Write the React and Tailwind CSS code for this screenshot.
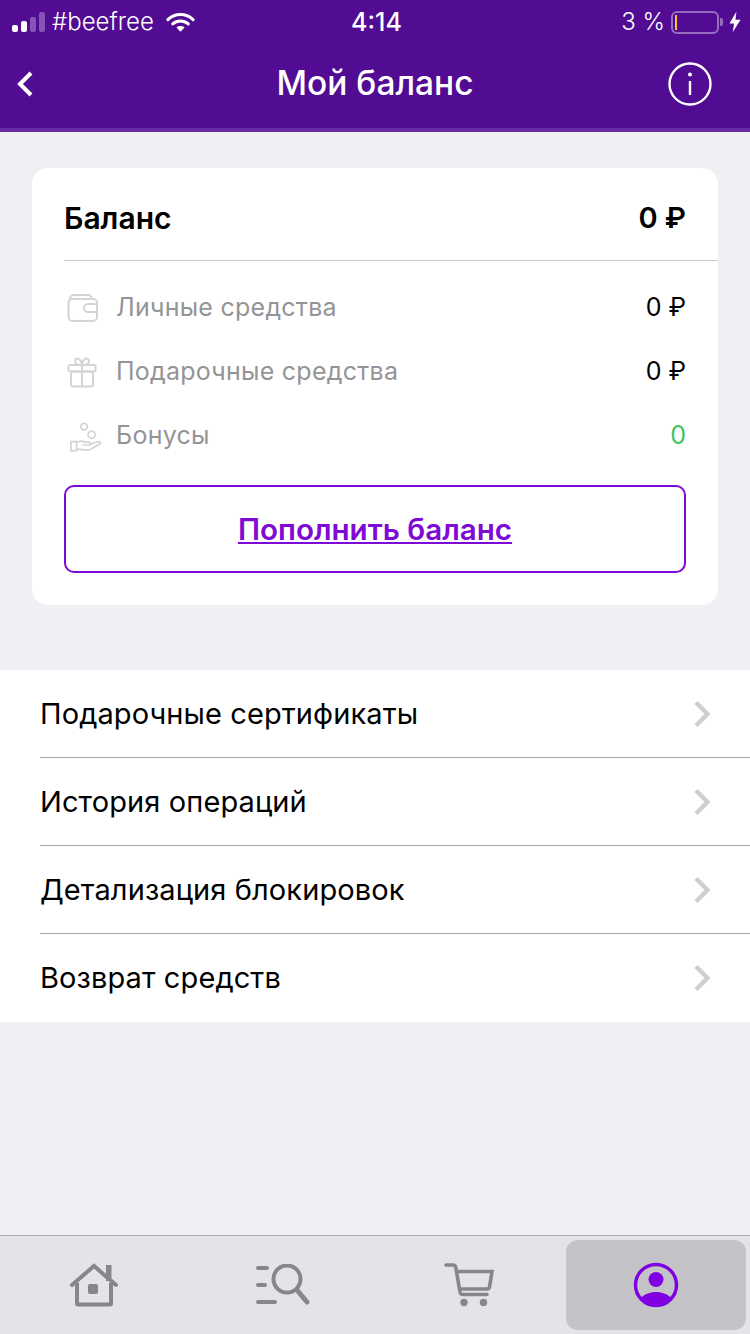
import React from 'react';

const font = 'font-["Inter","Noto_Sans",sans-serif]';

function StatusBar() {
  return (
    <div className="flex h-10 items-center justify-between pl-3 pr-[9px] pt-1 text-white">
      <div className="flex w-[260px] items-center">
        <div className="flex items-end gap-[3px]">
          <div className="h-[7px] w-[6px] rounded-[2px] bg-white" />
          <div className="h-[11px] w-[6px] rounded-[2px] bg-white" />
          <div className="h-[15px] w-[6px] rounded-[2px] bg-white/30" />
          <div className="h-[20px] w-[6px] rounded-[2px] bg-white/30" />
        </div>
        <span className="ml-[7px] text-[24px] font-light leading-none">#beefree</span>
        <svg className="ml-[12px]" width="29" height="22" viewBox="0 0 30 22" fill="none">
          <path d="M2 8.5C9.5 1.5 20.5 1.5 28 8.5" stroke="white" strokeWidth="3.2" strokeLinecap="round" />
          <path d="M7 13C11.5 9 18.5 9 23 13" stroke="white" strokeWidth="3.2" strokeLinecap="round" />
          <path d="M15 21L10.8 16.6C13.2 14.6 16.8 14.6 19.2 16.6Z" fill="white" />
        </svg>
      </div>
      <span className="text-[25px] font-medium leading-none">4:14</span>
      <div className="flex w-[260px] items-center justify-end">
        <span className="text-[24px] font-light leading-none">3 %</span>
        <div className="ml-[6px] flex h-[23px] w-[48px] items-center rounded-[6px] border-2 border-white/40 pl-[2px]">
          <div className="h-[15px] w-[2px] bg-[#f8c42c]" />
        </div>
        <div className="ml-[1px] h-[8px] w-[3px] rounded-r-[2px] bg-white/40" />
        <svg className="ml-[6px]" width="12" height="22" viewBox="0 0 13 22">
          <path d="M8 0L0.5 12.5H5.5L4 22L12.5 8.5H7Z" fill="white" />
        </svg>
      </div>
    </div>
  );
}

function NavBar() {
  return (
    <div className="box-content grid h-[88px] grid-cols-[1fr_auto_1fr] items-center border-b-4 border-[#6a2aa6] pl-4 pr-[38px]">
      <svg width="18" height="28" viewBox="0 0 18 28" fill="none">
        <path d="M15 3L4 14L15 25" stroke="white" strokeWidth="4" />
      </svg>
      <span className="pl-[22px] text-[33.5px] font-medium leading-none text-white">Мой баланс</span>
      <svg className="justify-self-end" width="44" height="44" viewBox="0 0 44 44" fill="none">
        <circle cx="22" cy="22" r="20.5" stroke="white" strokeWidth="2.4" />
        <circle cx="22" cy="12.5" r="2" fill="white" />
        <path d="M22 19V33" stroke="white" strokeWidth="2.4" />
      </svg>
    </div>
  );
}

function WalletIcon() {
  return (
    <svg width="32" height="28" viewBox="0 0 32 28" fill="none" stroke="#d4d4d6" strokeWidth="2">
      <path d="M3 5C3 2.5 5 1 7 1H21C23 1 24.5 2.5 24.5 4.5" strokeLinecap="round" />
      <rect x="1.5" y="5" width="28.5" height="22" rx="4" />
      <path d="M30 10H21C18.5 10 17 12 17 14C17 16 18.5 18 21 18H30" />
    </svg>
  );
}

function GiftIcon() {
  return (
    <svg width="30" height="31" viewBox="0 0 30 31" fill="none" stroke="#d4d4d6" strokeWidth="2">
      <rect x="1.5" y="8" width="27" height="6.5" rx="1.5" />
      <rect x="4" y="14.5" width="22" height="15" rx="2.5" />
      <path d="M15 8V29.5" />
      <path d="M15 8C12 8 8 7.5 8 4.2C8 1.8 10.5 0.8 12 2C13.8 3.4 15 6 15 8Z" />
      <path d="M15 8C18 8 22 7.5 22 4.2C22 1.8 19.5 0.8 18 2C16.2 3.4 15 6 15 8Z" />
    </svg>
  );
}

function BonusIcon() {
  return (
    <svg className="ml-[3px] mt-[2px]" width="32" height="30" viewBox="0 0 34 31" fill="none" stroke="#d4d4d6" strokeWidth="1.8">
      <circle cx="15" cy="4.5" r="3.5" />
      <circle cx="23" cy="13" r="3.8" />
      <path d="M1 20.5H7V30H1Z" />
      <path d="M7 21.5C10 19.5 13 19.5 15.5 21H20C22 21 22 24 20 24H14" strokeLinecap="round" />
      <path d="M20.5 23.5L29 20.5C32 19.8 33.2 21.5 31.5 23L21 29C18 30.2 12 28.8 7 28" strokeLinecap="round" />
    </svg>
  );
}

const balanceRows = [
  { label: 'Личные средства', value: '0 ₽', icon: <WalletIcon />, valueClass: 'text-black' },
  { label: 'Подарочные средства', value: '0 ₽', icon: <GiftIcon />, valueClass: 'text-black' },
  { label: 'Бонусы', value: '0', icon: <BonusIcon />, valueClass: 'text-[#3fc35f]' },
];

const menuRows = ['Подарочные сертификаты', 'История операций', 'Детализация блокировок', 'Возврат средств'];

function BalanceCard() {
  return (
    <div className="mx-8 mt-9 h-[437px] rounded-2xl bg-white pl-8">
      <div className="flex h-[93px] items-center justify-between border-b border-[#cdcdd0] pr-8 pt-2 font-semibold text-black">
        <span className="text-[30px]">Баланс</span>
        <span className="text-[29px]">0 ₽</span>
      </div>
      <div className="mt-[15px] pr-8">
        {balanceRows.map((row) => (
          <div key={row.label} className="flex h-16 items-center">
            <div className="flex w-[52px] shrink-0 items-center pl-[3px]">{row.icon}</div>
            <span className="flex-1 text-[25px] tracking-[0.25px] text-[#949496]">{row.label}</span>
            <span className={`text-[25px] ${row.valueClass}`}>{row.value}</span>
          </div>
        ))}
        <button
          type="button"
          className="mt-[17px] flex h-[88px] w-full items-center justify-center rounded-[10px] border-2 border-[#7f0ad6] text-[29.6px] font-semibold text-[#7f0ad6] underline"
        >
          Пополнить баланс
        </button>
      </div>
    </div>
  );
}

function MenuList() {
  return (
    <div className="mt-[65px] bg-white pl-10">
      {menuRows.map((label, i) => (
        <div
          key={label}
          className={`flex h-[88px] items-center justify-between pr-[39px] ${i < menuRows.length - 1 ? 'border-b border-[#a9a9ab]' : ''}`}
        >
          <span className="text-[29px] tracking-[0.1px] text-black">{label}</span>
          <svg width="18" height="28" viewBox="0 0 18 28" fill="none">
            <path d="M3 2.5L14.5 14L3 25.5" stroke="#cfcfd1" strokeWidth="4.4" />
          </svg>
        </div>
      ))}
    </div>
  );
}

function TabBar() {
  return (
    <div className="grid h-[99px] grid-cols-[1fr_1fr_1fr_180px] border-t border-[#aeaeb0] bg-[#e3e3e8] pb-1 pr-1 pt-1">
      <div className="flex items-center justify-center">
        <svg width="48" height="44" viewBox="0 0 48 44" fill="none">
          <path d="M2 22L24 3L46 22" stroke="#87878a" strokeWidth="4" strokeLinecap="round" />
          <path d="M7 20V40.5C7 41 7.5 41.5 8 41.5H40C40.5 41.5 41 41 41 40.5V20" stroke="#87878a" strokeWidth="4" />
          <rect x="36" y="2" width="5.5" height="16" fill="#87878a" />
          <rect x="18" y="21" width="10" height="10" rx="2" fill="#87878a" />
        </svg>
      </div>
      <div className="flex items-center justify-center">
        <svg width="54" height="42" viewBox="0 0 54 42" fill="none" stroke="#87878a" strokeLinecap="round">
          <path d="M2 4H11M2 21H9M2 38H19" strokeWidth="4" />
          <circle cx="31" cy="15" r="13.5" strokeWidth="4" />
          <path d="M41 26L51 38" strokeWidth="5" />
        </svg>
      </div>
      <div className="flex items-center justify-center pr-[5px]">
        <svg width="50" height="44" viewBox="0 0 50 44" fill="none">
          <path d="M2 2H9C10.5 2 11.5 3 11.8 4.5L16 29C16.3 30.5 17.5 31.5 19 31.5H43" stroke="#87878a" strokeWidth="3.6" strokeLinecap="round" />
          <path d="M12 8.5H48L45.5 24C45.3 25.3 44.3 26 43 26H15" stroke="#87878a" strokeWidth="3.6" />
          <circle cx="20" cy="39.5" r="3.7" fill="#87878a" />
          <circle cx="39.5" cy="39.5" r="3.7" fill="#87878a" />
        </svg>
      </div>
      <div className="flex items-center justify-center rounded-xl bg-[#c4c4c8]">
        <svg width="46" height="46" viewBox="0 0 46 46" fill="none">
          <circle cx="23" cy="23" r="20.5" stroke="#7f00e0" strokeWidth="3.4" />
          <circle cx="23" cy="17.5" r="7.5" fill="#7f00e0" />
          <path d="M7 37C11 32 17 30 23 30C29 30 35 32 39 37C35 42 29 44.5 23 44.5C17 44.5 11 42 7 37Z" fill="#7f00e0" />
        </svg>
      </div>
    </div>
  );
}

export default function App() {
  return (
    <div className={`flex h-[1334px] w-[750px] flex-col overflow-hidden bg-[#efeff4] ${font}`}>
      <div className="bg-[#520b93]">
        <StatusBar />
        <NavBar />
      </div>
      <div className="flex-1">
        <BalanceCard />
        <MenuList />
      </div>
      <TabBar />
    </div>
  );
}
